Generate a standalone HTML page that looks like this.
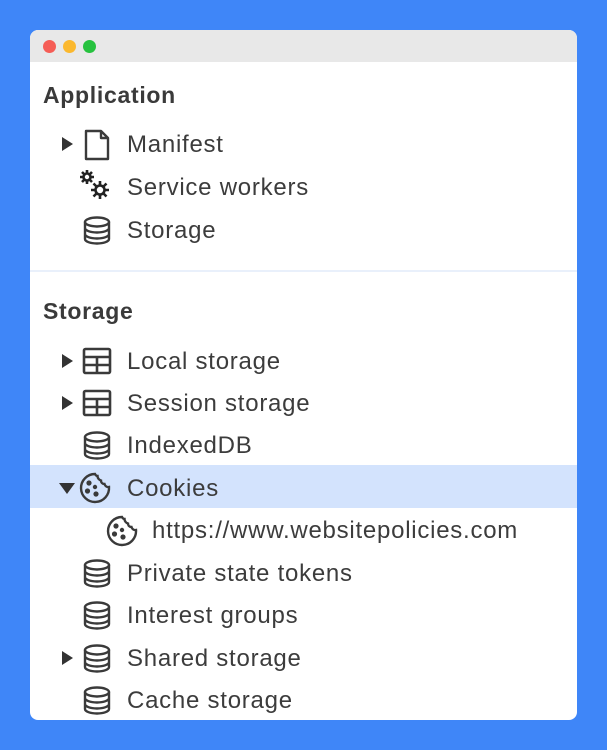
<!DOCTYPE html>
<html><head><style>
body{margin:0;width:607px;height:750px;background:#3f86f8;position:relative;overflow:hidden;font-family:"Liberation Sans",sans-serif;}
.card{position:absolute;left:30px;top:30px;width:547px;height:690px;background:#fff;border-radius:8px;overflow:hidden;}
.bar{position:absolute;left:0;top:0;width:547px;height:32px;background:#e8e8e8;}
.dot{position:absolute;top:10px;width:13px;height:13px;border-radius:50%;}
.t{position:absolute;font-size:24px;letter-spacing:0.75px;color:#3c3c3c;line-height:30px;white-space:nowrap;margin-top:1px;}
.h{position:absolute;font-size:23px;letter-spacing:0.7px;font-weight:bold;color:#3a3a3a;line-height:30px;}
svg{position:absolute;}
.arr{position:absolute;width:0;height:0;border-top:7px solid transparent;border-bottom:7px solid transparent;border-left:11px solid #333;}
.arrd{position:absolute;width:0;height:0;border-left:8px solid transparent;border-right:8px solid transparent;border-top:11px solid #333;}
</style></head><body>
<svg width="0" height="0" style="position:absolute"><defs>
<g id="db" fill="none" stroke="#3a3a3a" stroke-width="2.4"><ellipse cx="15" cy="7" rx="12" ry="4.5"/><path d="M3 7v17c0 2.5 5.4 4.5 12 4.5s12-2 12-4.5V7M3 13c0 2.5 5.4 4.5 12 4.5s12-2 12-4.5M3 19c0 2.5 5.4 4.5 12 4.5s12-2 12-4.5"/></g>
<g id="tb" fill="none" stroke="#3a3a3a" stroke-width="2.6"><rect x="3" y="3" width="26" height="24" rx="1.5"/><path d="M3 11h26M3 19h26M16 11v16"/></g>
<g id="ck" fill="none" stroke="#3a3a3a" stroke-width="2.4"><path d="M17 3A14 14 0 1 0 31 16c-2 .5-4-1-4.5-3-2 0-3.5-1.5-3.5-3.5C21 9 19.5 7 19.5 5c-1 0-2-1-2.5-2z"/><circle cx="11" cy="12" r="1.4" fill="#3a3a3a"/><circle cx="9.5" cy="20" r="1.4" fill="#3a3a3a"/><circle cx="18" cy="23" r="1.4" fill="#3a3a3a"/><circle cx="17" cy="16" r="1" fill="#3a3a3a"/></g>
</defs></svg>
<div class="card">
<div class="bar"><div class="dot" style="left:13px;background:#f55d56"></div><div class="dot" style="left:33px;background:#fbb82e"></div><div class="dot" style="left:53px;background:#27c23f"></div></div>
<div class="h" style="left:13px;top:50px">Application</div>
<div class="arr" style="left:32px;top:107px"></div>
<svg style="left:52px;top:99px" width="30" height="32" viewBox="0 0 30 32"><path d="M4 2h15l7 7v21H4z M19 2v7h7" fill="none" stroke="#3a3a3a" stroke-width="2.4" stroke-linejoin="round"/></svg>
<div class="t" style="left:97px;top:99px">Manifest</div>
<svg style="left:48px;top:138px" width="40" height="36" viewBox="0 0 40 36"><g fill="none" stroke="#222" stroke-width="2.6"><circle cx="9" cy="9" r="3.5"/><circle cx="22" cy="22" r="4.5"/></g><g stroke="#222" stroke-width="2.6"><path d="M9 2v3M9 13v3M2 9h3M13 9h3M4 4l2 2M12 12l2 2M14 4l-2 2M4 14l2-2M22 13v4M22 27v4M13 22h4M27 22h4M15.5 15.5l3 3M25.5 25.5l3 3M28.5 15.5l-3 3M15.5 28.5l3-3"/></g></svg>
<div class="t" style="left:97px;top:142px">Service workers</div>
<svg style="left:52px;top:185px" width="30" height="32"><use href="#db"/></svg>
<div class="t" style="left:97px;top:185px">Storage</div>
<div style="position:absolute;left:0;top:240px;width:547px;height:2px;background:#e9f0fb"></div>
<div class="h" style="left:13px;top:266px">Storage</div>
<div class="arr" style="left:32px;top:324px"></div>
<svg style="left:51px;top:316px" width="32" height="30"><use href="#tb"/></svg>
<div class="t" style="left:97px;top:316px">Local storage</div>
<div class="arr" style="left:32px;top:366px"></div>
<svg style="left:51px;top:358px" width="32" height="30"><use href="#tb"/></svg>
<div class="t" style="left:97px;top:358px">Session storage</div>
<svg style="left:52px;top:400px" width="30" height="32"><use href="#db"/></svg>
<div class="t" style="left:97px;top:400px">IndexedDB</div>
<div style="position:absolute;left:0;top:435px;width:547px;height:43px;background:#d3e3fd"></div>
<div class="arrd" style="left:29px;top:453px"></div>
<svg style="left:48px;top:441px" width="34" height="34"><use href="#ck"/></svg>
<div class="t" style="left:97px;top:443px">Cookies</div>
<svg style="left:75px;top:484px" width="34" height="34"><use href="#ck"/></svg>
<div class="t" style="left:122px;top:485px">https://www.websitepolicies.com</div>
<svg style="left:52px;top:528px" width="30" height="32"><use href="#db"/></svg>
<div class="t" style="left:97px;top:528px">Private state tokens</div>
<svg style="left:52px;top:570px" width="30" height="32"><use href="#db"/></svg>
<div class="t" style="left:97px;top:570px">Interest groups</div>
<div class="arr" style="left:32px;top:621px"></div>
<svg style="left:52px;top:613px" width="30" height="32"><use href="#db"/></svg>
<div class="t" style="left:97px;top:613px">Shared storage</div>
<svg style="left:52px;top:655px" width="30" height="32"><use href="#db"/></svg>
<div class="t" style="left:97px;top:655px">Cache storage</div>
</div>
</body></html>
